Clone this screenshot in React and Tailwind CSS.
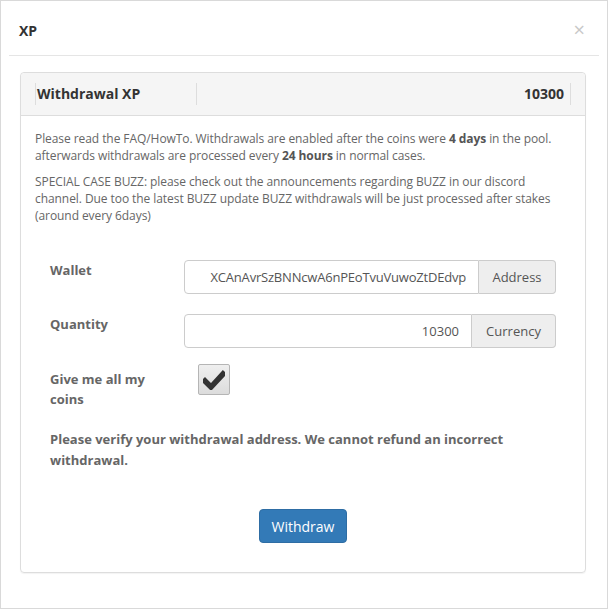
import React from 'react'

const App = () => {
    return (
        <div className="w-[608px] h-[609px] bg-white border border-[#d9d9d9] px-2 font-['Open_Sans',sans-serif] text-[#555]">
            <div className="h-[55px] border-b border-[#e5e5e5] flex items-center justify-between pl-[10px] pr-[14px]">
                <h4 className="text-[14px] font-bold text-[#333] pt-[5px]">XP</h4>
                <span className="text-[20px] leading-none text-[#c8c8c8] pt-[4px]">×</span>
            </div>

            <div className="pt-4 pl-[11px] pr-[13px]">
                <div className="border border-[#ddd] rounded-[4px] shadow-[0_1px_1px_rgba(0,0,0,0.05)]">
                    <div className="h-[43px] bg-[#f5f5f5] border-b border-[#ddd] rounded-t-[4px] px-[14px] flex items-center">
                        <div className="w-full h-[22px] flex border-x border-[#ddd]">
                            <div className="w-[161px] border-r border-[#ddd] pl-[1px] text-[14px] font-bold text-[#333] leading-[22px]">Withdrawal XP</div>
                            <div className="flex-1 text-right pr-[6px] text-[14px] font-bold text-[#333] leading-[22px]">10300</div>
                        </div>
                    </div>

                    <div className="px-[14px] pt-[14px] pb-[29px] text-[12px] leading-[17px] text-[#666] tracking-[-0.07px]">
                        <p>
                            Please read the FAQ/HowTo. Withdrawals are enabled after the coins were <b className="text-[#555]">4 days</b> in the pool. afterwards withdrawals are processed every <b className="text-[#555]">24 hours</b> in normal cases.
                        </p>
                        <p className="mt-[9px] pr-[6px]">
                            SPECIAL CASE BUZZ: please check out the announcements regarding BUZZ in our discord channel. Due too the latest BUZZ update BUZZ withdrawals will be just processed after stakes (around every 6days)
                        </p>

                        <div className="mt-[36px] px-[15px] tracking-normal">
                            <div className="flex items-center">
                                <label className="w-[134px] text-[13px] font-bold text-[#666] -mt-[14px]">Wallet</label>
                                <div className="flex-1 flex h-[34px]">
                                    <input
                                        readOnly
                                        value="XCAnAvrSzBNNcwA6nPEoTvuVuwoZtDEdvp"
                                        className="flex-1 min-w-0 border border-[#ccc] rounded-l-[4px] px-3 text-right text-[13px] tracking-[-0.2px] text-[#555] outline-none"
                                    />
                                    <span className="w-[77px] flex items-center justify-center bg-[#eee] border border-l-0 border-[#ccc] rounded-r-[4px] text-[13px] text-[#555]">Address</span>
                                </div>
                            </div>

                            <div className="flex items-center mt-[20px]">
                                <label className="w-[134px] text-[13px] font-bold text-[#666] -mt-[14px]">Quantity</label>
                                <div className="flex-1 flex h-[34px]">
                                    <input
                                        readOnly
                                        value="10300"
                                        className="flex-1 min-w-0 border border-[#ccc] rounded-l-[4px] px-3 text-right text-[13px] text-[#555] outline-none"
                                    />
                                    <span className="w-[84px] flex items-center justify-center bg-[#eee] border border-l-0 border-[#ccc] rounded-r-[4px] text-[13px] text-[#555]">Currency</span>
                                </div>
                            </div>

                            <div className="flex items-start mt-[21px]">
                                <label className="w-[148px] pr-[20px] text-[13px] font-bold text-[#666] leading-[20px]">Give me all my coins</label>
                                <div className="w-[32px] h-[31px] mt-[-5px] rounded-[2px] border border-[#b5b5b5] bg-gradient-to-b from-[#efefef] to-[#dcdcdc] flex items-center justify-center">
                                    <svg width="22" height="20" viewBox="0 0 22 20">
                                        <path d="M2 11 L8 17 L20 4" fill="none" stroke="#333" strokeWidth="5.5" strokeLinecap="square" strokeLinejoin="miter" />
                                    </svg>
                                </div>
                            </div>

                            <p className="mt-[20px] text-[13px] font-bold text-[#666] leading-[21px]">
                                Please verify your withdrawal address. We cannot refund an incorrect withdrawal.
                            </p>
                        </div>

                        <div className="mt-[38px] flex justify-center">
                            <button className="h-[34px] px-3 rounded-[4px] bg-[#337ab7] border border-[#2e6da4] text-white text-[14px] tracking-normal">
                                Withdraw
                            </button>
                        </div>
                    </div>
                </div>
            </div>
        </div>
    )
}

export default App
